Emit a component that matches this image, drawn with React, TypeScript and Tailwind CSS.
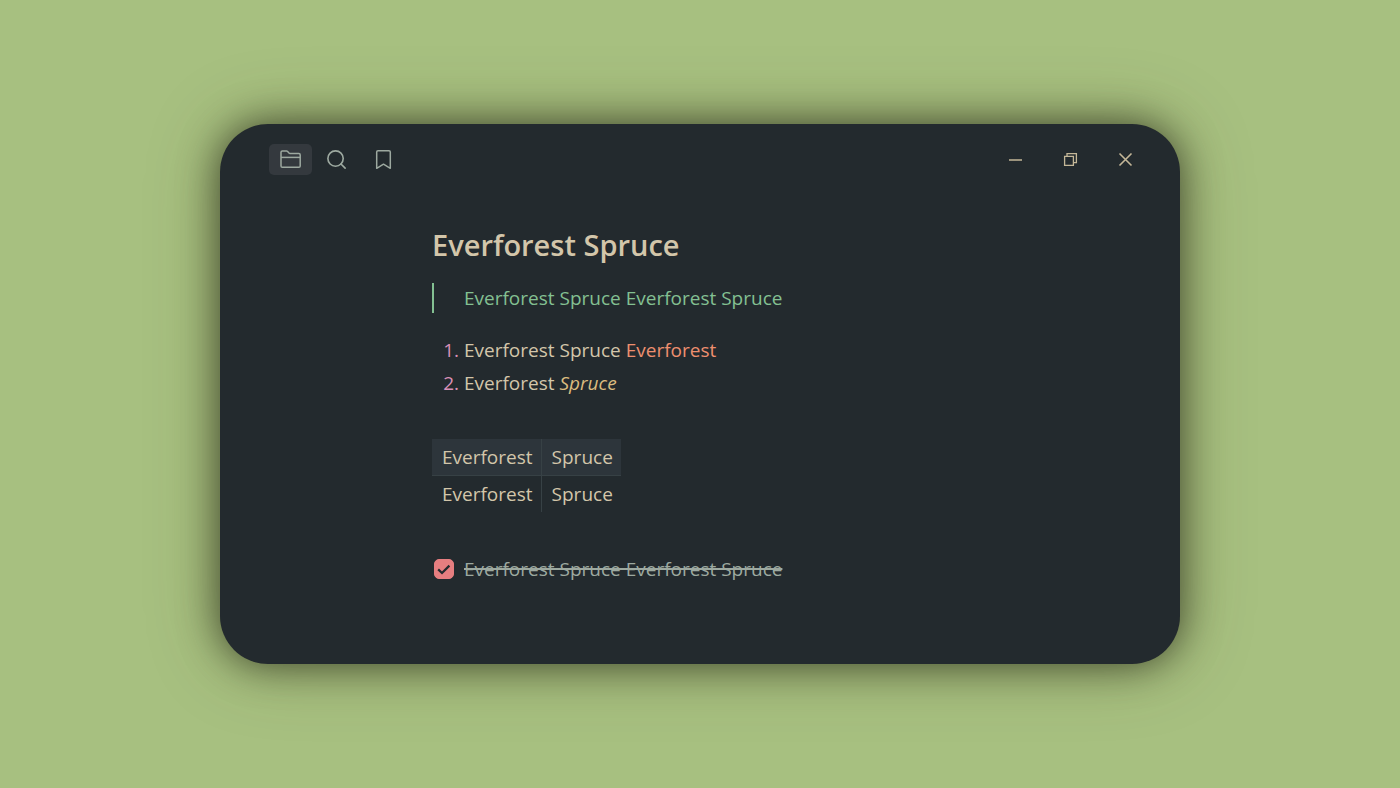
import { Search } from "lucide-react";

const FolderIcon = () => (
  <svg width="23" height="21" viewBox="0 0 23 21" fill="none" stroke="currentColor" strokeWidth="1.5" strokeLinejoin="round" aria-hidden="true">
    <path d="M2 17V3.3Q2 2 3.3 2H7.6Q8.2 2 8.6 2.6L10 4.1Q10.4 4.6 11 4.6H19.9Q21.2 4.6 21.2 5.9V17Q21.2 18.3 19.9 18.3H3.3Q2 18.3 2 17Z" />
    <path d="M2 8.4H21.2" />
  </svg>
);

const BookmarkIcon = () => (
  <svg width="23" height="23" viewBox="0 0 23 23" fill="none" stroke="currentColor" strokeWidth="1.5" strokeLinejoin="round" aria-hidden="true">
    <path d="M5.7 20.3V4Q5.7 2.7 7 2.7H18Q19.3 2.7 19.3 4V20.3L12.5 16.2Z" />
  </svg>
);

const tabClass = "flex h-[31px] w-[43px] items-center justify-center rounded-[5px]";
const controlClass = "flex h-[31px] w-[55px] items-center justify-center text-[#c4b798]";

export default function App() {
  return (
    <div className="flex min-h-screen items-center justify-center bg-[#a7c080] px-6 font-['Open_Sans','Segoe_UI',sans-serif] text-[19px] leading-[30px] text-[#d3c6aa]">
      <div className="min-h-[540px] w-full max-w-[960px] rounded-[48px] bg-[#232a2e] pt-5 pb-20 shadow-[0_0_38px_rgba(0,0,0,0.55),0_0_70px_rgba(70,60,20,0.35)]">
        <header className="flex items-center justify-between pr-[27px] pl-[49px]">
          <nav className="flex gap-[3px] text-[#9da9a0]" aria-label="Sidebar">
            <button className={`${tabClass} bg-[#34393e]`} aria-label="Files">
              <FolderIcon />
            </button>
            <button className={tabClass} aria-label="Search">
              <Search size={23} strokeWidth={1.7} />
            </button>
            <button className={tabClass} aria-label="Bookmarks">
              <BookmarkIcon />
            </button>
          </nav>
          <div className="flex">
            <button className={controlClass} aria-label="Minimize">
              <svg width="15" height="15" viewBox="0 0 15 15" stroke="currentColor" strokeWidth="1.5" aria-hidden="true">
                <path d="M1 8H14" />
              </svg>
            </button>
            <button className={controlClass} aria-label="Restore">
              <svg width="15" height="15" viewBox="0 0 15 15" fill="none" stroke="currentColor" strokeWidth="1.3" aria-hidden="true">
                <path d="M1.6 4.4H10.4V13.4H1.6ZM4 4.4V1.6H13.4V10.6H10.4" />
              </svg>
            </button>
            <button className={controlClass} aria-label="Close">
              <svg width="15" height="15" viewBox="0 0 15 15" stroke="currentColor" strokeWidth="1.6" aria-hidden="true">
                <path d="M1.5 1.5L13.5 13.5M13.5 1.5L1.5 13.5" />
              </svg>
            </button>
          </div>
        </header>

        <main className="mx-auto w-full max-w-[536px] pt-[50px]">
          <h1 className="text-[29px] leading-10 font-semibold">Everforest Spruce</h1>
          <blockquote className="mt-[18px] border-l-2 border-[#83c092] pl-[30px] text-[#83c092]">
            Everforest Spruce Everforest Spruce
          </blockquote>
          <ol className="mt-[22px] flex list-decimal flex-col gap-[3px] pl-8 marker:text-[#d990b8]">
            <li>
              Everforest Spruce <span className="text-[#ee8f6f]">Everforest</span>
            </li>
            <li>
              Everforest <em className="text-[#dbbc7f]">Spruce</em>
            </li>
          </ol>
          <table className="mt-[41px] border-collapse text-left">
            <thead>
              <tr className="border-b border-[#374145] bg-[#2d353b]">
                <th className="border-r border-[#374145] py-[3px] pr-2 pl-[10px] font-normal">Everforest</th>
                <th className="py-[3px] pr-2 pl-[10px] font-normal">Spruce</th>
              </tr>
            </thead>
            <tbody>
              <tr>
                <td className="border-r border-[#374145] py-[3px] pr-2 pl-[10px]">Everforest</td>
                <td className="py-[3px] pr-2 pl-[10px]">Spruce</td>
              </tr>
            </tbody>
          </table>
          <label className="mt-[42px] flex items-center gap-[10px] pl-[2px] text-[#9da9a0]">
            <span className="grid size-5">
              <input
                type="checkbox"
                defaultChecked
                className="peer col-start-1 row-start-1 size-5 appearance-none rounded-[5px] border border-[#e67e80] checked:bg-[#e67e80]"
              />
              <svg
                className="pointer-events-none invisible col-start-1 row-start-1 size-5 peer-checked:visible"
                viewBox="0 0 20 20"
                fill="none"
                stroke="#232a2e"
                strokeWidth="2.2"
                aria-hidden="true"
              >
                <path d="M4.2 10.4L8 14L15.4 6.6" />
              </svg>
            </span>
            <span className="line-through decoration-2">Everforest Spruce Everforest Spruce</span>
          </label>
        </main>
      </div>
    </div>
  );
}
